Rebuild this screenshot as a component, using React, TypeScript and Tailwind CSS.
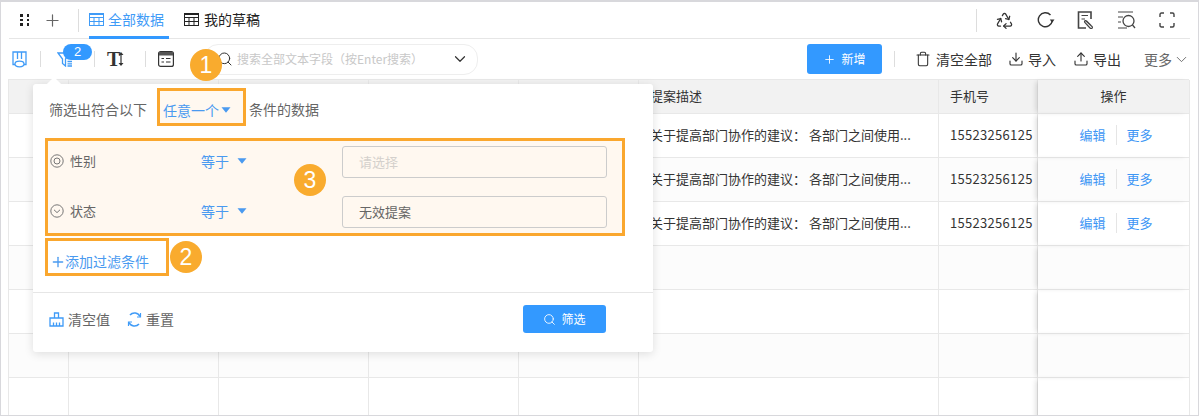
import React from "react";
import { Plus, Recycle, Trash, Download, Upload, ChevronDown, Search } from "lucide-react";

const TableIcon = ({ className = "" }: { className?: string }) => (
  <svg width="15" height="13" viewBox="0 0 15 13" fill="none" stroke="currentColor" strokeWidth="1" className={className}>
    <rect x="0.5" y="0.5" width="14" height="12" />
    <path d="M0.5 1.5H14.5M0.5 4.5H14.5M0.5 8.5H14.5M5 4.5V12.5M10 4.5V12.5" />
  </svg>
);

const Caret = () => (
  <svg width="10" height="6" viewBox="0 0 10 6" className="text-[#4a9af0]" fill="currentColor">
    <path d="M0.5 0.2H9.5L5 5.8Z" />
  </svg>
);

const Sep = ({ className = "" }: { className?: string }) => <div className={`w-px h-4 bg-[#dddddd] shrink-0 ${className}`} />;

const Badge = ({ n, className }: { n: string; className: string }) => (
  <div
    className={`absolute w-8 h-8 rounded-full bg-[#f9ab2e] text-white text-[23px] leading-8 text-center ${className}`}
    style={{ fontFamily: '"Liberation Sans", sans-serif' }}
  >
    {n}
  </div>
);

const columns = "grid-cols-[60px_150px_150px_150px_120px_300px_99px_152px]";

function Row({ striped, filled }: { striped: boolean; filled: boolean }) {
  const cell = "border-r border-b border-[#e8e8e8] h-[44px] flex items-center pb-[2px] text-[13px] text-[#333333]";
  return (
    <div className={`grid ${columns} ${striped ? "bg-[#fcfcfc]" : "bg-white"}`}>
      <div className={cell} />
      <div className={cell} />
      <div className={cell} />
      <div className={cell} />
      <div className={cell} />
      <div className={`${cell} pl-[11px] whitespace-nowrap overflow-hidden`}>{filled ? "关于提高部门协作的建议： 各部门之间使用..." : ""}</div>
      <div className={`${cell} pl-[11px] tracking-[0.3px]`}>{filled ? "15523256125" : ""}</div>
      <div className={`${cell} justify-center pl-[5px] shadow-[-4px_0_5px_-2px_rgba(0,0,0,0.14)]`}>
        {filled && (
          <div className="flex items-center text-[#3d96f5]">
            <span className="text-[13px] pr-[10px] border-r border-[#e5e5e5] leading-5">编辑</span>
            <span className="text-[13px] pl-[10px] leading-5">更多</span>
          </div>
        )}
      </div>
    </div>
  );
}

export default function App() {
  return (
    <div
      className="relative w-[1199px] h-[416px] overflow-hidden bg-white border-t-2 border-l border-r border-b border-[#d8d8dc] text-[#333333]"
      style={{ fontFamily: '"Noto Sans CJK SC", "Liberation Sans", sans-serif' }}
    >
      {/* top tabs */}
      <div className="h-[37px] ml-2 mr-2 border-b border-[#e6e6e6] flex items-center">
        <div className="grid grid-cols-2 gap-x-[4px] gap-y-[2px] ml-[11px]">
          {[0, 1, 2, 3, 4, 5].map((i) => (
            <span key={i} className="w-[2.5px] h-[2.5px] bg-[#222222]" />
          ))}
        </div>
        <Plus size={19} strokeWidth={1.5} className="ml-[14px] text-[#666666]" />
        <div className="w-px h-[23px] bg-[#dddddd] ml-[16px]" />
        <div className="ml-[10px] h-full w-[80px] flex items-center gap-[4px] border-b-[3px] border-[#3399ff] text-[#3f9bf7] text-[14px] pt-[1px] -mb-px">
          <TableIcon />
          全部数据
        </div>
        <div className="ml-[15px] mb-[2px] flex items-center gap-[5px] text-[14px] text-[#222222]">
          <TableIcon />
          我的草稿
        </div>
        <div className="ml-auto w-px h-[23px] bg-[#dddddd]" />
        <Recycle size={19} strokeWidth={1.6} className="ml-[18px] text-[#333333]" />
        <svg width="18" height="18" viewBox="0 0 18 18" fill="none" stroke="#333333" strokeWidth="1.4" className="ml-[23px]">
          <path d="M13.5 4A7 7 0 1 0 15.3 9.5" />
          <path d="M12.8 8.5H17.5L15.2 11.8Z" fill="#333333" stroke="none" />
        </svg>
        <svg width="17" height="18" viewBox="0 0 17 18" fill="none" stroke="#444444" strokeWidth="1.6" className="ml-[22px]">
          <path d="M14 8V1H1.5V17H9" />
          <path d="M4.5 4.5H11M4.5 8H8" strokeWidth="1.2" />
          <path d="M8.5 9.5L15 15.5C16.3 17 14.3 18.4 13 17L7.8 11.5C7 10 8.4 9 9.6 10L14 14.5" strokeWidth="1.2" />
        </svg>
        <svg width="19" height="19" viewBox="0 0 19 19" fill="none" stroke="#444444" strokeWidth="1.1" className="ml-[23px]">
          <path d="M1 1H16M1 6H6M1 11H4M1 17H10" />
          <circle cx="11.5" cy="10" r="5.5" strokeWidth="1.3" />
          <path d="M15.5 14L18 17" strokeWidth="1.3" />
        </svg>
        <svg width="16" height="16" viewBox="0 0 16 16" fill="none" stroke="#444444" strokeWidth="1.4" className="ml-[23px] mr-[15px]">
          <path d="M1 5V2.5Q1 1 2.5 1H5M11 1H13.5Q15 1 15 2.5V5M15 11V13.5Q15 15 13.5 15H11M5 15H2.5Q1 15 1 13.5V11" />
        </svg>
      </div>

      {/* toolbar */}
      <div className="h-[40px] flex items-center text-[14px] text-[#333333]">
        <svg width="15" height="17" viewBox="0 0 15 17" fill="none" stroke="#3f9bf7" strokeWidth="1.3" className="ml-[11px]">
          <path d="M3 13.5H1V1H14V13.5H12" />
          <path d="M5.5 1V8M9.5 1V8" />
          <ellipse cx="7.5" cy="13" rx="4.5" ry="2.8" />
        </svg>
        <Sep className="ml-[13px]" />
        <div className="relative ml-[16px] w-[16px] h-[16px]">
          <svg width="16" height="16" viewBox="0 0 16 16" fill="none" stroke="#3f9bf7" strokeWidth="1.3">
            <path d="M1 2H13L8.5 8V15L5.5 12.5V8Z" />
            <path d="M10.5 10.5H15M10.5 12.8H15M10.5 15H15" />
          </svg>
          <div
            className="absolute left-[6px] -top-[7px] w-[29px] h-[16px] rounded-full bg-[#3399ff] text-white text-[13px] leading-4 text-center"
            style={{ fontFamily: '"Liberation Sans", sans-serif' }}
          >
            2
          </div>
        </div>
        <Sep className="ml-[21px]" />
        <div className="ml-[12px] flex items-center w-[18px] shrink-0">
          <span className="text-[20px] font-bold leading-none text-[#333333] -mr-[2px]" style={{ fontFamily: '"Liberation Serif", serif' }}>T</span>
          <svg width="6" height="14" viewBox="0 0 6 14" fill="#333333" className="shrink-0">
            <path d="M3 0L5.5 3H3.6V11H5.5L3 14L0.5 11H2.4V3H0.5Z" />
          </svg>
        </div>
        <Sep className="ml-[20px]" />
        <svg width="16" height="16" viewBox="0 0 16 16" fill="none" stroke="#333333" strokeWidth="1.2" className="ml-[12px]">
          <rect x="0.6" y="0.6" width="14.8" height="14.8" rx="2" />
          <path d="M1 1.5Q1 1 2 1H14Q15 1 15 1.5V4.5H1Z" fill="#555555" stroke="none" />
          <path d="M3.5 7.5H6M8 7.5H12.5M3.5 11H6M8 11H12.5" />
        </svg>
        <div className="ml-[30px] w-[274px] h-[31px] rounded-[14px] border border-[#eeeeee] flex items-center pl-3 pr-2">
          <Search size={16} strokeWidth={1.5} className="text-[#333333]" />
          <span className="ml-[4px] text-[12px] text-[#c8c8c8]">搜索全部文本字段（按Enter搜索）</span>
          <ChevronDown size={18} strokeWidth={1.6} className="ml-auto text-[#333333]" />
        </div>
        <div className="ml-auto flex items-center">
          <div className="w-[75px] h-[30px] rounded-[3px] bg-[#3399ff] text-white text-[12px] flex items-center justify-center gap-[5px]">
            <Plus size={13} strokeWidth={1.6} />
            新增
          </div>
          <Sep className="ml-[12px]" />
          <Trash size={16} strokeWidth={1.6} className="ml-[20px] text-[#333333]" />
          <span className="ml-[5px]">清空全部</span>
          <Download size={16} strokeWidth={1.7} className="ml-[16px] text-[#333333]" />
          <span className="ml-[4px]">导入</span>
          <Upload size={16} strokeWidth={1.7} className="ml-[17px] text-[#333333]" />
          <span className="ml-[4px]">导出</span>
          <span className="ml-[23px] text-[#666666]">更多</span>
          <ChevronDown size={17} strokeWidth={1.3} className="ml-[1px] mr-[8px] text-[#666666]" />
        </div>
      </div>

      {/* table */}
      <div className="ml-[7px] w-[1181px] border-l border-t border-[#e8e8e8]">
        <div className={`grid ${columns} bg-[#f2f2f2]`}>
          {["", "", "", "", "", "提案描述", "手机号"].map((t, i) => (
            <div key={i} className="h-[34px] border-r border-b border-[#e8e8e8] flex items-center pl-[11px] pb-[2px] text-[13px] text-[#333333]">{t}</div>
          ))}
          <div className="h-[34px] border-r border-b border-[#e8e8e8] flex items-center justify-center pb-[2px] text-[13px] shadow-[-4px_0_5px_-2px_rgba(0,0,0,0.14)]">操作</div>
        </div>
        {[0, 1, 2, 3, 4, 5, 6].map((i) => (
          <Row key={i} striped={i % 2 === 1} filled={i < 3} />
        ))}
      </div>

      {/* filter popover */}
      <div className="absolute left-[32px] top-[82px] w-[620px] h-[268px] bg-white rounded-[3px] shadow-[0_2px_10px_rgba(0,0,0,0.12)] flex flex-col text-[14px]">
        <div className="absolute left-[16px] -top-[5px] w-[10px] h-[10px] rotate-45 bg-white" />
        <div className="relative h-[54px] flex items-center pl-4 pb-[3px] text-[#666666]">
          <span>筛选出符合以下</span>
          <div className="ml-[10px] mt-[-5px] w-[89px] h-[38px] border-[3px] border-[#faa72e] bg-[#fff8f0] flex items-center pl-[3px] pt-[6px] gap-[2px] text-[#4a9af0]">
            任意一个
            <Caret />
          </div>
          <span className="ml-[3px]">条件的数据</span>
        </div>
        <div className="ml-3 w-[580px] h-[98px] border-[3px] border-[#faa72e] bg-[#fff8f0] flex flex-col gap-[10px]">
          <div className="h-[40px] flex items-center pl-[2px]">
            <svg width="14" height="14" viewBox="0 0 14 14" fill="none" stroke="#777777" strokeWidth="1" className="shrink-0">
              <circle cx="7" cy="7" r="6.2" />
              <circle cx="7" cy="7" r="3" />
            </svg>
            <span className="ml-[6px] w-[131px] text-[13px] text-[#666666]">性别</span>
            <span className="text-[#4a9af0]">等于</span>
            <span className="ml-[8px] flex"><Caret /></span>
            <div className="ml-[95px] mt-[2px] w-[265px] h-[32px] rounded-[3px] border border-[#cccccc] pl-4 flex items-center text-[13px] text-[#d4d0cc]">请选择</div>
          </div>
          <div className="h-[40px] flex items-center pl-[2px]">
            <svg width="14" height="14" viewBox="0 0 14 14" fill="none" stroke="#777777" strokeWidth="1" className="shrink-0">
              <circle cx="7" cy="7" r="6.2" />
              <path d="M4 5.8L7 8.6L10 5.8" />
            </svg>
            <span className="ml-[6px] w-[131px] text-[13px] text-[#666666]">状态</span>
            <span className="text-[#4a9af0]">等于</span>
            <span className="ml-[8px] flex"><Caret /></span>
            <div className="ml-[95px] mt-[2px] w-[265px] h-[32px] rounded-[3px] border border-[#cccccc] pl-4 flex items-center text-[13px] text-[#666666]">无效提案</div>
          </div>
        </div>
        <div className="mx-3 mt-[2px] w-[124px] h-[38px] border-[3px] border-[#faa72e] flex items-center pl-[2px] pt-[9px] text-[#4a9af0]">
          <Plus size={16} strokeWidth={2} className="-mr-px" />
          添加过滤条件
        </div>
        <div className="mt-[16px] border-t border-[#e6e6e6] flex-1 flex items-center pl-[16px] pr-[47px] pb-[7px] text-[#666666]">
          <svg width="15" height="15" viewBox="0 0 15 15" fill="none" stroke="#3f9bf7" strokeWidth="1.3">
            <path d="M5.5 6V1H9.5V6M1 14V6H14V14Z" />
            <path d="M4.5 14V10.5M7.5 14V10.5M10.5 14V10.5" />
          </svg>
          <span className="ml-[4px]">清空值</span>
          <svg width="15" height="15" viewBox="0 0 15 15" fill="none" stroke="#3f9bf7" strokeWidth="1.6" className="ml-[17px]">
            <path d="M13 4.5A6 6 0 0 0 3 3M2 10.5A6 6 0 0 0 12 12" />
            <path d="M13.5 1V5H10M1.5 14V10H5" strokeWidth="1.2" />
          </svg>
          <span className="ml-[4px]">重置</span>
          <div className="ml-auto w-[83px] h-[28px] rounded-[3px] bg-[#3399ff] text-white text-[12px] flex items-center justify-center gap-[5px]">
            <Search size={13} strokeWidth={1.6} />
            筛选
          </div>
        </div>
      </div>

      <Badge n="1" className="left-[189px] top-[47px]" />
      <Badge n="2" className="left-[169px] top-[239px]" />
      <Badge n="3" className="left-[293px] top-[162px]" />
    </div>
  );
}
